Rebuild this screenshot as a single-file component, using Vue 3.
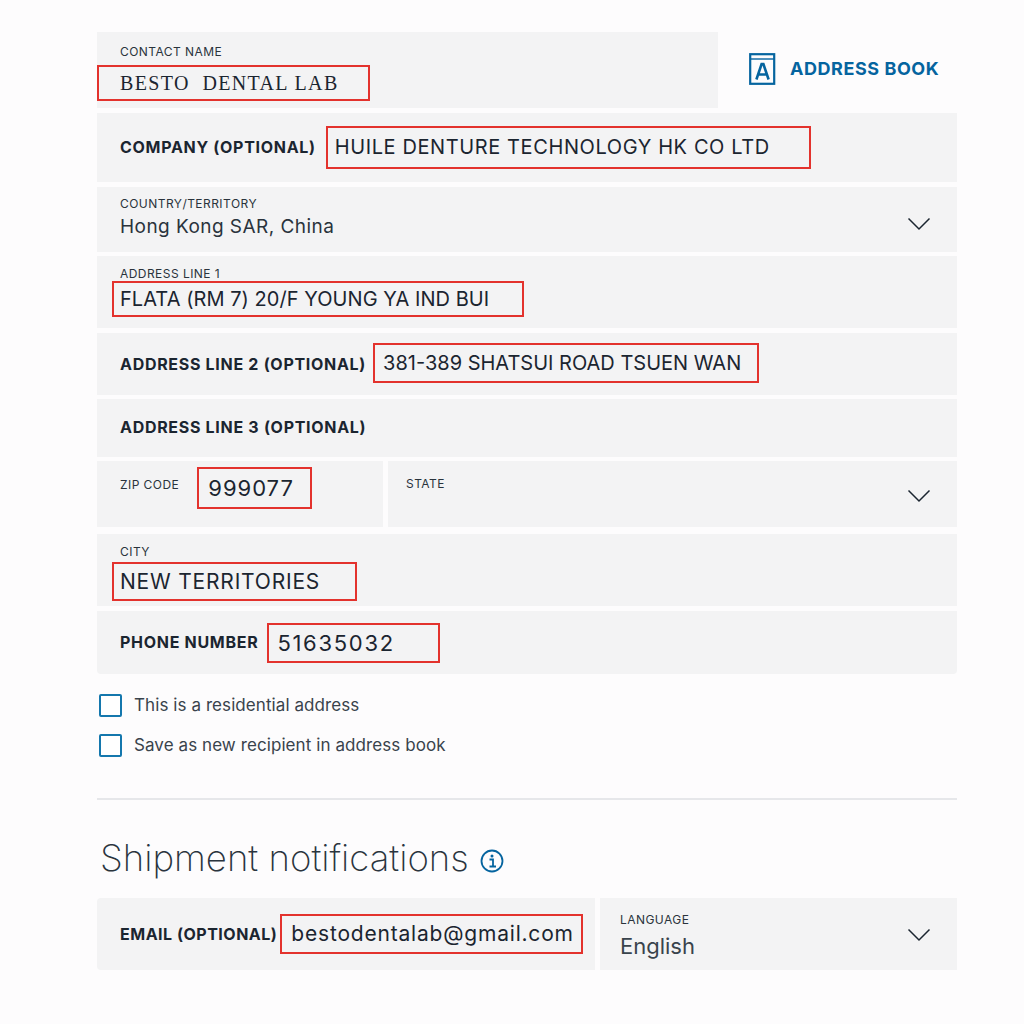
<template>
  <div class="page">
    <div class="top-row">
      <div class="field stacked contact">
        <span class="label small">CONTACT NAME</span>
        <span class="value serif marked contact-mark">BESTO&nbsp; DENTAL LAB</span>
      </div>
      <a class="book-link">
        <svg width="27" height="32" viewBox="0 0 27 32" fill="none" stroke="#05649f">
          <rect x="1.2" y="1.2" width="24" height="29.6" stroke-width="2.2" />
          <path d="M1.5 6h23.5" stroke-width="1.4" />
          <path d="M7.4 26.5 12.6 11h1.8l5.2 15.5M9.2 21.5h8.6" stroke-width="2.6" />
        </svg>
        <span>ADDRESS BOOK</span>
      </a>
    </div>

    <div class="field inline company">
      <span class="label strong">COMPANY (OPTIONAL)</span>
      <span class="value marked company-mark">HUILE DENTURE TECHNOLOGY HK CO LTD</span>
    </div>

    <div class="field stacked country">
      <span class="label small">COUNTRY/TERRITORY</span>
      <span class="value plain">Hong Kong SAR, China</span>
      <svg class="chevron" width="24" height="14" viewBox="0 0 24 14" fill="none" stroke="#1b2530" stroke-width="1.5">
        <path d="M1.5 1.5 12 12 22.5 1.5" />
      </svg>
    </div>

    <div class="field stacked line1">
      <span class="label small">ADDRESS LINE 1</span>
      <span class="value marked line1-mark">FLATA (RM 7) 20/F YOUNG YA IND BUI</span>
    </div>

    <div class="field inline line2">
      <span class="label strong">ADDRESS LINE 2 (OPTIONAL)</span>
      <span class="value marked line2-mark">381-389 SHATSUI ROAD TSUEN WAN</span>
    </div>

    <div class="field inline line3">
      <span class="label strong">ADDRESS LINE 3 (OPTIONAL)</span>
    </div>

    <div class="split-row zip-row">
      <div class="field zip">
        <span class="label small">ZIP CODE</span>
        <span class="value marked zip-mark">999077</span>
      </div>
      <div class="field stacked state">
        <span class="label small">STATE</span>
        <svg class="chevron" width="24" height="14" viewBox="0 0 24 14" fill="none" stroke="#1b2530" stroke-width="1.5">
          <path d="M1.5 1.5 12 12 22.5 1.5" />
        </svg>
      </div>
    </div>

    <div class="field stacked city">
      <span class="label small">CITY</span>
      <span class="value marked city-mark">NEW TERRITORIES</span>
    </div>

    <div class="field inline phone">
      <span class="label strong">PHONE NUMBER</span>
      <span class="value marked phone-mark">51635032</span>
    </div>

    <div class="checks">
      <label v-for="item in checks" :key="item" class="check">
        <span class="box"></span>
        <span>{{ item }}</span>
      </label>
    </div>

    <hr class="divider" />

    <h2 class="heading">
      Shipment notifications
      <svg class="info" width="24" height="24" viewBox="0 0 24 24" fill="none">
        <circle cx="12" cy="12" r="10.5" stroke="#05649f" stroke-width="1.8" />
        <circle cx="12" cy="7" r="1.5" fill="#05649f" />
        <path d="M9.5 10.5H13v7M9.5 17.5H16" stroke="#05649f" stroke-width="1.8" />
      </svg>
    </h2>

    <div class="split-row email-row">
      <div class="field inline email">
        <span class="label strong">EMAIL (OPTIONAL)</span>
        <span class="value marked email-mark">bestodentalab@gmail.com</span>
      </div>
      <div class="field stacked language">
        <span class="label small">LANGUAGE</span>
        <span class="value plain">English</span>
        <svg class="chevron" width="24" height="14" viewBox="0 0 24 14" fill="none" stroke="#1b2530" stroke-width="1.5">
          <path d="M1.5 1.5 12 12 22.5 1.5" />
        </svg>
      </div>
    </div>
  </div>
</template>

<script setup>
const checks = ['This is a residential address', 'Save as new recipient in address book']
</script>

<style>
html,
body {
  background: #fdfcfd;
}
</style>

<style scoped>
.page {
  box-sizing: border-box;
  width: 1024px;
  height: 1024px;
  padding: 32px 67px 0 97px;
  font-family: "Inter", "Liberation Sans", sans-serif;
  color: #1b2530;
  overflow: hidden;
}

.top-row {
  display: flex;
  height: 76px;
  margin-bottom: 5px;
}

.field {
  position: relative;
  box-sizing: border-box;
  background: #f3f3f4;
  padding-left: 23px;
}

.stacked {
  display: flex;
  flex-direction: column;
  align-items: flex-start;
}

.inline {
  display: flex;
  align-items: center;
}

.contact {
  width: 621px;
  padding-top: 13px;
}

.label {
  white-space: nowrap;
}

.small {
  font-size: 12px;
  line-height: 13px;
  letter-spacing: 0.45px;
  color: #2a333c;
}

.strong {
  font-size: 16px;
  font-weight: 700;
  letter-spacing: 0.7px;
  color: #1b2530;
}

.value {
  font-size: 20px;
  line-height: 24px;
  white-space: nowrap;
  letter-spacing: 0.6px;
}

.serif {
  font-family: "Liberation Serif", serif;
  letter-spacing: 1.35px;
}

.plain {
  margin-top: 5px;
  font-size: 19px;
  letter-spacing: 0.45px;
  color: #2a333c;
}

.marked {
  box-sizing: border-box;
  display: flex;
  align-items: center;
  border: 2px solid #e3322d;
}

.contact-mark {
  width: 273px;
  height: 36px;
  margin: 7px 0 0 -23px;
  padding-left: 21px;
}

.book-link {
  display: flex;
  align-items: center;
  gap: 14px;
  margin: -3px 0 0 31px;
  font-size: 18px;
  font-weight: 700;
  letter-spacing: 0.55px;
  color: #05649f;
}

.company {
  height: 69px;
  margin: 0 0 5px;
  width: 860px;
}

.company .strong,
.line3 .strong,
.phone .strong {
  margin-bottom: 2px;
}

.company-mark {
  width: 485px;
  height: 43px;
  margin: -1px 0 0 10px;
  padding-left: 7px;
}

.country {
  width: 860px;
  height: 65px;
  margin-bottom: 4px;
  padding-top: 10px;
}

.chevron {
  position: absolute;
  right: 26px;
  top: 30px;
}

.line1 {
  width: 860px;
  height: 72px;
  margin-bottom: 5px;
  padding-top: 11px;
}

.line1-mark {
  width: 412px;
  height: 36px;
  margin: 1px 0 0 -8px;
  padding-left: 6px;
  letter-spacing: 0.05px;
}

.line2 {
  width: 860px;
  height: 62px;
  margin-bottom: 4px;
}

.line2-mark {
  width: 386px;
  height: 40px;
  margin: -3px 0 0 7px;
  padding-left: 8px;
  letter-spacing: 0;
}

.line3 {
  width: 860px;
  height: 58px;
  margin-bottom: 4px;
}

.split-row {
  display: flex;
  gap: 5px;
  width: 860px;
}

.zip-row {
  height: 66px;
  margin-bottom: 7px;
}

.zip {
  display: flex;
  align-items: flex-start;
  width: 286px;
  padding-top: 17px;
}

.zip-mark {
  width: 115px;
  height: 42px;
  margin: -11px 0 0 18px;
  padding-left: 9px;
  font-size: 22px;
  letter-spacing: 1px;
}

.state {
  flex: 1;
  padding-top: 16px;
  padding-left: 18px;
}

.state .chevron {
  top: 28px;
}

.city {
  width: 860px;
  height: 72px;
  margin-bottom: 5px;
  padding-top: 11px;
}

.city-mark {
  width: 245px;
  height: 39px;
  margin: 4px 0 0 -8px;
  padding-left: 6px;
  font-size: 21px;
  letter-spacing: 0.8px;
}

.phone {
  width: 860px;
  height: 63px;
  border-radius: 0 0 4px 4px;
}

.phone-mark {
  width: 173px;
  height: 40px;
  margin: 0 0 0 9px;
  padding-left: 8px;
  font-size: 22px;
  letter-spacing: 1.7px;
}

.checks {
  display: flex;
  flex-direction: column;
  gap: 18px;
  margin: 20px 0 0 2px;
}

.check {
  display: flex;
  align-items: center;
  gap: 12px;
  height: 22px;
  font-size: 17px;
  letter-spacing: 0.08px;
  color: #39434c;
}

.box {
  box-sizing: border-box;
  width: 23px;
  height: 23px;
  border: 2px solid #1477ad;
  border-radius: 2px;
  background: #fff;
}

.divider {
  width: 860px;
  height: 0;
  margin: 42px 0 0;
  border: 0;
  border-top: 2px solid #e6e7ea;
}

.heading {
  display: flex;
  align-items: center;
  gap: 11px;
  height: 44px;
  margin: 36px 0 18px 3px;
  font-size: 36.6px;
  font-weight: 200;
  color: #2a343d;
}

.info {
  margin-top: 5px;
}

.email-row {
  height: 72px;
}

.email {
  width: 498px;
  border-radius: 4px 0 0 4px;
}

.email .strong {
  letter-spacing: 0.5px;
}

.email-mark {
  width: 303px;
  height: 40px;
  margin: 0 0 0 3px;
  padding-left: 9px;
  font-size: 21px;
  letter-spacing: 0.8px;
}

.language {
  flex: 1;
  padding-top: 15px;
  padding-left: 20px;
}

.language .plain {
  margin-top: 8px;
  font-size: 22px;
  letter-spacing: 0;
  color: #39434c;
}
</style>
